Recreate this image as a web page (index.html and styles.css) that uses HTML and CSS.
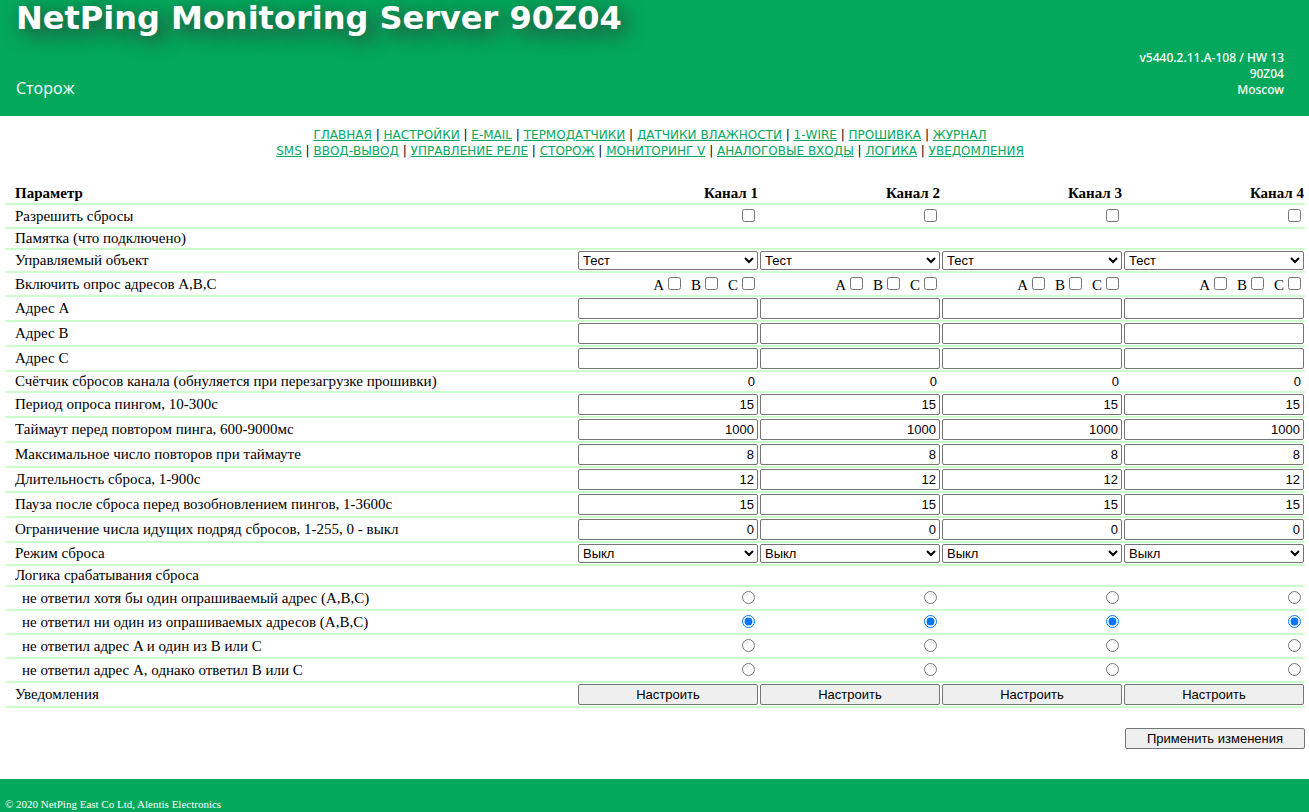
FILE: index.html
```
<!DOCTYPE html>
<html lang="ru">
<head>
    <meta charset="UTF-8">
    <title>NetPing Monitoring Server 90Z04</title>
    <link rel="stylesheet" href="styles.css">
</head>
<body>
    <header class="header">
        <h1 class="title">NetPing Monitoring Server 90Z04</h1>
        <div class="header-bottom">
            <h2 class="page-name">Сторож</h2>
            <div class="device">v5440.2.11.A-108 / HW 13<br>90Z04<br>Moscow</div>
        </div>
    </header>

    <nav class="menu">
        <div>
            <a href="#">ГЛАВНАЯ</a> | <a href="#">НАСТРОЙКИ</a> | <a href="#">E-MAIL</a> | <a href="#">ТЕРМОДАТЧИКИ</a> | <a href="#">ДАТЧИКИ ВЛАЖНОСТИ</a> | <a href="#">1-WIRE</a> | <a href="#">ПРОШИВКА</a> | <a href="#">ЖУРНАЛ</a>
        </div>
        <div>
            <a href="#">SMS</a> | <a href="#">ВВОД-ВЫВОД</a> | <a href="#">УПРАВЛЕНИЕ РЕЛЕ</a> | <a href="#">СТОРОЖ</a> | <a href="#">МОНИТОРИНГ V</a> | <a href="#">АНАЛОГОВЫЕ ВХОДЫ</a> | <a href="#">ЛОГИКА</a> | <a href="#">УВЕДОМЛЕНИЯ</a>
        </div>
    </nav>

    <form class="settings">
        <table class="params">
            <thead>
                <tr>
                    <th>Параметр</th>
                    <th class="channel">Канал 1</th>
                    <th class="channel">Канал 2</th>
                    <th class="channel">Канал 3</th>
                    <th class="channel">Канал 4</th>
                </tr>
            </thead>
            <tbody id="rows"></tbody>
        </table>
        <div class="actions">
            <button type="button" class="btn">Применить изменения</button>
        </div>
    </form>

    <footer class="footer">© 2020 NetPing East Co Ltd, Alentis Electronics</footer>

    <script>
        // label, kind of cell, value
        const rows = [
            ['Разрешить сбросы', 'check'],
            ['Памятка (что подключено)', 'text', ''],
            ['Управляемый объект', 'select', 'Тест'],
            ['Включить опрос адресов A,B,C', 'abc'],
            ['Адрес A', 'input', ''],
            ['Адрес B', 'input', ''],
            ['Адрес C', 'input', ''],
            ['Счётчик сбросов канала (обнуляется при перезагрузке прошивки)', 'text', '0'],
            ['Период опроса пингом, 10-300с', 'input', '15'],
            ['Таймаут перед повтором пинга, 600-9000мс', 'input', '1000'],
            ['Максимальное число повторов при таймауте', 'input', '8'],
            ['Длительность сброса, 1-900с', 'input', '12'],
            ['Пауза после сброса перед возобновлением пингов, 1-3600с', 'input', '15'],
            ['Ограничение числа идущих подряд сбросов, 1-255, 0 - выкл', 'input', '0'],
            ['Режим сброса', 'select', 'Выкл'],
            ['Логика срабатывания сброса', 'text', ''],
            ['не ответил хотя бы один опрашиваемый адрес (A,B,C)', 'radio', ''],
            ['не ответил ни один из опрашиваемых адресов (A,B,C)', 'radio', 'checked'],
            ['не ответил адрес A и один из B или C', 'radio', ''],
            ['не ответил адрес A, однако ответил B или C', 'radio', ''],
            ['Уведомления', 'button', 'Настроить']
        ];

        function cell(label, kind, value, ch) {
            const name = label + ', канал ' + ch;
            switch (kind) {
                case 'check':
                    return `<input type="checkbox" aria-label="${name}">`;
                case 'abc':
                    return ['A', 'B', 'C'].map(x => `<label>${x}<input type="checkbox"></label>`).join('');
                case 'select':
                    return `<select class="field" aria-label="${name}"><option>${value}</option></select>`;
                case 'input':
                    return `<input type="text" class="field" value="${value}" aria-label="${name}">`;
                case 'radio':
                    return `<input type="radio" name="logic${ch}" ${value} aria-label="${name}">`;
                case 'button':
                    return `<button type="button" class="btn">${value}</button>`;
            }
            return value;
        }

        let html = '';
        for (const [label, kind, value] of rows) {
            html += `<tr class="row-${kind}"><td>${label}</td>`;
            for (let ch = 1; ch <= 4; ch++) {
                html += `<td>${cell(label, kind, value, ch)}</td>`;
            }
            html += '</tr>';
        }
        document.getElementById('rows').innerHTML = html;
    </script>
</body>
</html>
```
FILE: styles.css
```
* {
    box-sizing: border-box;
}

body {
    margin: 0;
    min-height: 100vh;
    display: flex;
    flex-direction: column;
    background: #fff;
    color: #000;
    font-family: "Liberation Serif", "Times New Roman", serif;
    font-size: 15px;
}

/* Header */
.header {
    display: flex;
    flex-direction: column;
    justify-content: space-between;
    min-height: 116px;
    padding: 0 25px 18px 16px;
    background: #03a85c;
    color: #fff;
}

.title {
    margin: 0;
    font: bold 32px/36px "DejaVu Sans", Verdana, sans-serif;
    text-shadow: 5px 5px 20px #333;
}

.header-bottom {
    display: flex;
    justify-content: space-between;
    align-items: flex-end;
}

.page-name {
    margin: 0;
    font: 16px/20px "Open Sans", Tahoma, sans-serif;
}

.device {
    font: 500 12px/16px "Noto Sans", Tahoma, sans-serif;
    text-align: right;
}

/* Menu */
.menu {
    padding: 11px 9px 0 0;
    font: 12px/16px "DejaVu Sans", Tahoma, sans-serif;
    text-align: center;
}

.menu a {
    color: #03a85c;
}

/* Settings table */
.settings {
    padding: 23px 4px 0 5px;
}

.params {
    width: 100%;
    table-layout: fixed;
    border-spacing: 0;
    line-height: 17px;
}

.params th,
.params td {
    height: 25px;
    padding: 0 1px;
    border-bottom: 2px solid #cfc;
    text-align: right;
}

.params th {
    height: 23px;
    padding-top: 2px;
}

.params th:first-child,
.params td:first-child {
    padding-left: 10px;
    text-align: left;
}

.channel {
    width: 14%;
}

.params .row-text td {
    height: 21px;
}

.params .row-text td + td {
    padding-right: 4px;
    font: 13px "Liberation Sans", Arial, sans-serif;
}

.params .row-select td {
    height: 23px;
}

.params .row-check td,
.params .row-abc td,
.params .row-radio td {
    height: 24px;
}

.params .row-radio td:first-child {
    padding-left: 17px;
}

.params input[type="checkbox"],
.params input[type="radio"] {
    margin: 3px 3px 3px 4px;
}

.row-abc label {
    margin-left: 7px;
}

.field,
.btn {
    display: block;
    width: 100%;
    height: 21px;
    border: 1px solid #767676;
    border-radius: 2px;
    color: #000;
    font: 13px "Liberation Sans", Arial, sans-serif;
}

.field {
    padding: 1px 3px;
    background: #fff;
    text-align: right;
}

select.field {
    height: 19px;
    padding: 0;
    text-align: left;
}

.btn {
    padding: 1px 6px;
    background: #efefef;
    text-align: center;
}

.actions {
    display: flex;
    justify-content: flex-end;
    padding: 20px 0 30px;
}

.actions .btn {
    width: 180px;
}

/* Footer */
.footer {
    flex-grow: 1;
    padding: 18px 5px 0;
    background: #03a85c;
    color: #fff;
    font-size: 11px;
    line-height: 14px;
}
```
